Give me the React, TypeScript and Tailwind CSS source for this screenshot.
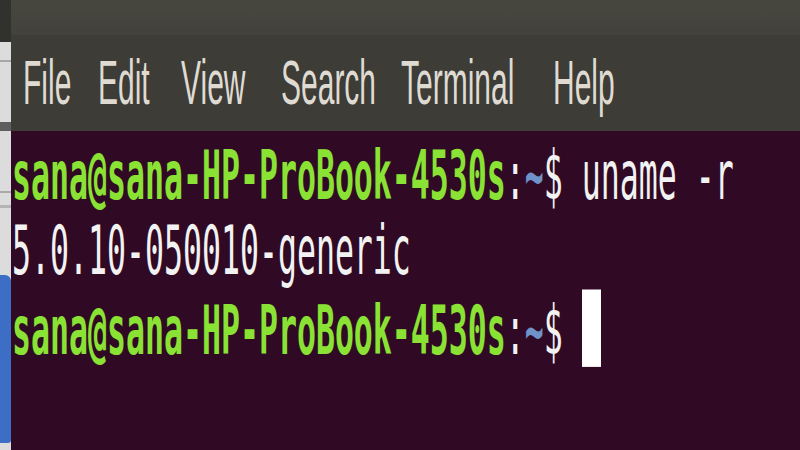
import React from "react";

const menu = [
  { label: "File", w: "w-[75px]" },
  { label: "Edit", w: "w-[83px]" },
  { label: "View", w: "w-[100px]" },
  { label: "Search", w: "w-[120px]" },
  { label: "Terminal", w: "w-[152px]" },
  { label: "Help", w: "w-[80px]" },
];

const Prompt = () => (
  <>
    <span className="font-bold text-[#8ae234]">sana@sana-HP-ProBook-4530s</span>
    <span className="text-[#f2f2f2]">:</span>
    <span className="font-bold text-[#6f93c9]">~</span>
    <span className="text-[#f2f2f2]">$ </span>
  </>
);

export default function App() {
  return (
    <div className="flex h-[450px] w-[800px] overflow-hidden bg-[#300a24]">
      {/* strip of the window behind */}
      <div className="flex w-[11px] flex-col bg-[#dcdcdc]">
        <div className="h-[42px] bg-[#31312e]" />
        <div className="h-[18px]" />
        <div className="h-[2px] bg-[#a8a8a8]" />
        <div className="h-[60px]" />
        <div className="h-[9px] bg-[#5e5e5e]" />
        <div className="h-[60px]" />
        <div className="h-[2px] bg-[#a8a8a8]" />
        <div className="h-[12px]" />
        <div className="h-[3px] bg-[#b4b4b4]" />
        <div className="h-[67px]" />
        <div className="h-[168px] rounded-tr-[6px] rounded-br-[3px] bg-[#3b6ec4]" />
      </div>

      <div className="flex flex-1 flex-col">
        <div className="h-[131px] bg-[#3d3c37]">
          <div className="h-[35px] bg-gradient-to-b from-[#48473f] to-[#42413b]" />
          <div
            className="mt-[17px] flex h-[30px] origin-top scale-y-[2.09] pl-[12px] text-[30px] leading-[30px] text-[#dfdbd2]"
            style={{ fontFamily: '"Liberation Sans", Arial, sans-serif' }}
          >
            {menu.map((m) => (
              <span key={m.label} className={`${m.w} shrink-0`}>
                {m.label}
              </span>
            ))}
          </div>
        </div>

        <div className="flex-1 pt-[8px] pl-[1px]">
          <div
            className="origin-top-left scale-y-[2.15] whitespace-pre text-[31.56px] leading-[35.2px] text-[#f2f2f2]"
            style={{ fontFamily: '"DejaVu Sans Mono", "Liberation Mono", monospace' }}
          >
            <div>
              <Prompt />
              uname -r
            </div>
            <div>5.0.10-050010-generic</div>
            <div>
              <Prompt />
              <span className="inline-block h-[36px] w-[19px] bg-white align-[-6px]" />
            </div>
          </div>
        </div>
      </div>
    </div>
  );
}
